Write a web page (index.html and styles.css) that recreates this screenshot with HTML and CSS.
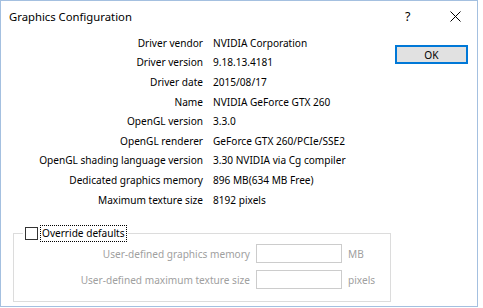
FILE: index.html
```html
<!DOCTYPE html>
<html lang="en">
<head>
    <meta charset="UTF-8">
    <title>Graphics Configuration</title>
    <link rel="stylesheet" href="styles.css">
</head>
<body>

    <div class="window">
        <div class="titlebar">
            <span class="title">Graphics Configuration</span>
            <span class="help">?</span>
            <span class="close">
                <svg width="11" height="11" viewBox="0 0 11 11">
                    <path d="M0.5 0.5 L10.5 10.5 M10.5 0.5 L0.5 10.5" stroke="#000" stroke-width="1" fill="none"/>
                </svg>
            </span>
        </div>

        <div class="main">
            <div class="info">
                <span class="label">Driver vendor</span><span class="value">NVIDIA Corporation</span>
                <span class="label">Driver version</span><span class="value">9.18.13.4181</span>
                <span class="label">Driver date</span><span class="value">2015/08/17</span>
                <span class="label">Name</span><span class="value">NVIDIA GeForce GTX 260</span>
                <span class="label">OpenGL version</span><span class="value">3.3.0</span>
                <span class="label">OpenGL renderer</span><span class="value">GeForce GTX 260/PCIe/SSE2</span>
                <span class="label">OpenGL shading language version</span><span class="value">3.30 NVIDIA via Cg compiler</span>
                <span class="label">Dedicated graphics memory</span><span class="value">896 MB(634 MB Free)</span>
                <span class="label">Maximum texture size</span><span class="value">8192 pixels</span>
            </div>
            <div class="actions">
                <button class="ok" type="button">OK</button>
            </div>
        </div>

        <fieldset class="group">
            <legend class="group-title">
                <span class="check"></span>
                <span class="focus">Override defaults</span>
            </legend>
            <div class="override">
                <span class="dim-label">User-defined graphics memory</span>
                <span class="field"></span>
                <span class="unit">MB</span>
                <span class="dim-label">User-defined maximum texture size</span>
                <span class="field"></span>
                <span class="unit">pixels</span>
            </div>
        </fieldset>
    </div>

</body>
</html>
```

FILE: styles.css
```css
body {
    margin: 0;
    background: #fff;
    font-family: "Noto Sans", "Liberation Sans", sans-serif;
    font-size: 10.1px;
    color: #000;
}

.window {
    box-sizing: border-box;
    width: 478px;
    height: 307px;
    border: 1px solid #a4c0e0;
    background: #fff;
}

.titlebar {
    display: flex;
    align-items: center;
    height: 30px;
    padding-left: 8px;
}

.title {
    flex: 1;
    font-size: 11.3px;
}

.help {
    font-size: 12.5px;
    width: 14px;
    margin-right: 31px;
}

.close {
    display: flex;
    margin-right: 16px;
}

.main {
    display: flex;
    align-items: flex-start;
}

.info {
    flex: 1;
    display: grid;
    grid-template-columns: 202px auto;
    grid-auto-rows: 19.6px;
    column-gap: 10px;
    align-items: center;
    margin-top: 2px;
}

.label {
    text-align: right;
    white-space: nowrap;
}

.value {
    white-space: nowrap;
}

.actions {
    padding: 14px 9px 0 0;
}

.ok {
    box-sizing: border-box;
    width: 73px;
    height: 19px;
    background: #e1e1e1;
    border: 2px solid #0078d7;
    font-family: inherit;
    font-size: 10.2px;
    padding: 0;
    color: #000;
}

.group {
    margin: 17px 0 0 12px;
    width: 378px;
    height: 76px;
    box-sizing: border-box;
    border: 1px solid #dcdcdc;
    padding: 0;
}

.group-title {
    display: flex;
    align-items: center;
    margin-left: 9px;
    padding: 0 2px;
}

.check {
    box-sizing: border-box;
    width: 13px;
    height: 13px;
    border: 1px solid #333;
    margin-right: 3px;
}

.focus {
    outline: 1px dotted #000;
    padding: 0 1px;
    line-height: 15px;
}

.override {
    display: grid;
    grid-template-columns: 236px 86px auto;
    grid-auto-rows: 19px;
    row-gap: 7px;
    column-gap: 6px;
    align-items: center;
    margin-top: 3px;
    color: #a0a0a0;
}

.dim-label {
    text-align: right;
    white-space: nowrap;
}

.field {
    box-sizing: border-box;
    height: 19px;
    border: 1px solid #cccccc;
}
```
